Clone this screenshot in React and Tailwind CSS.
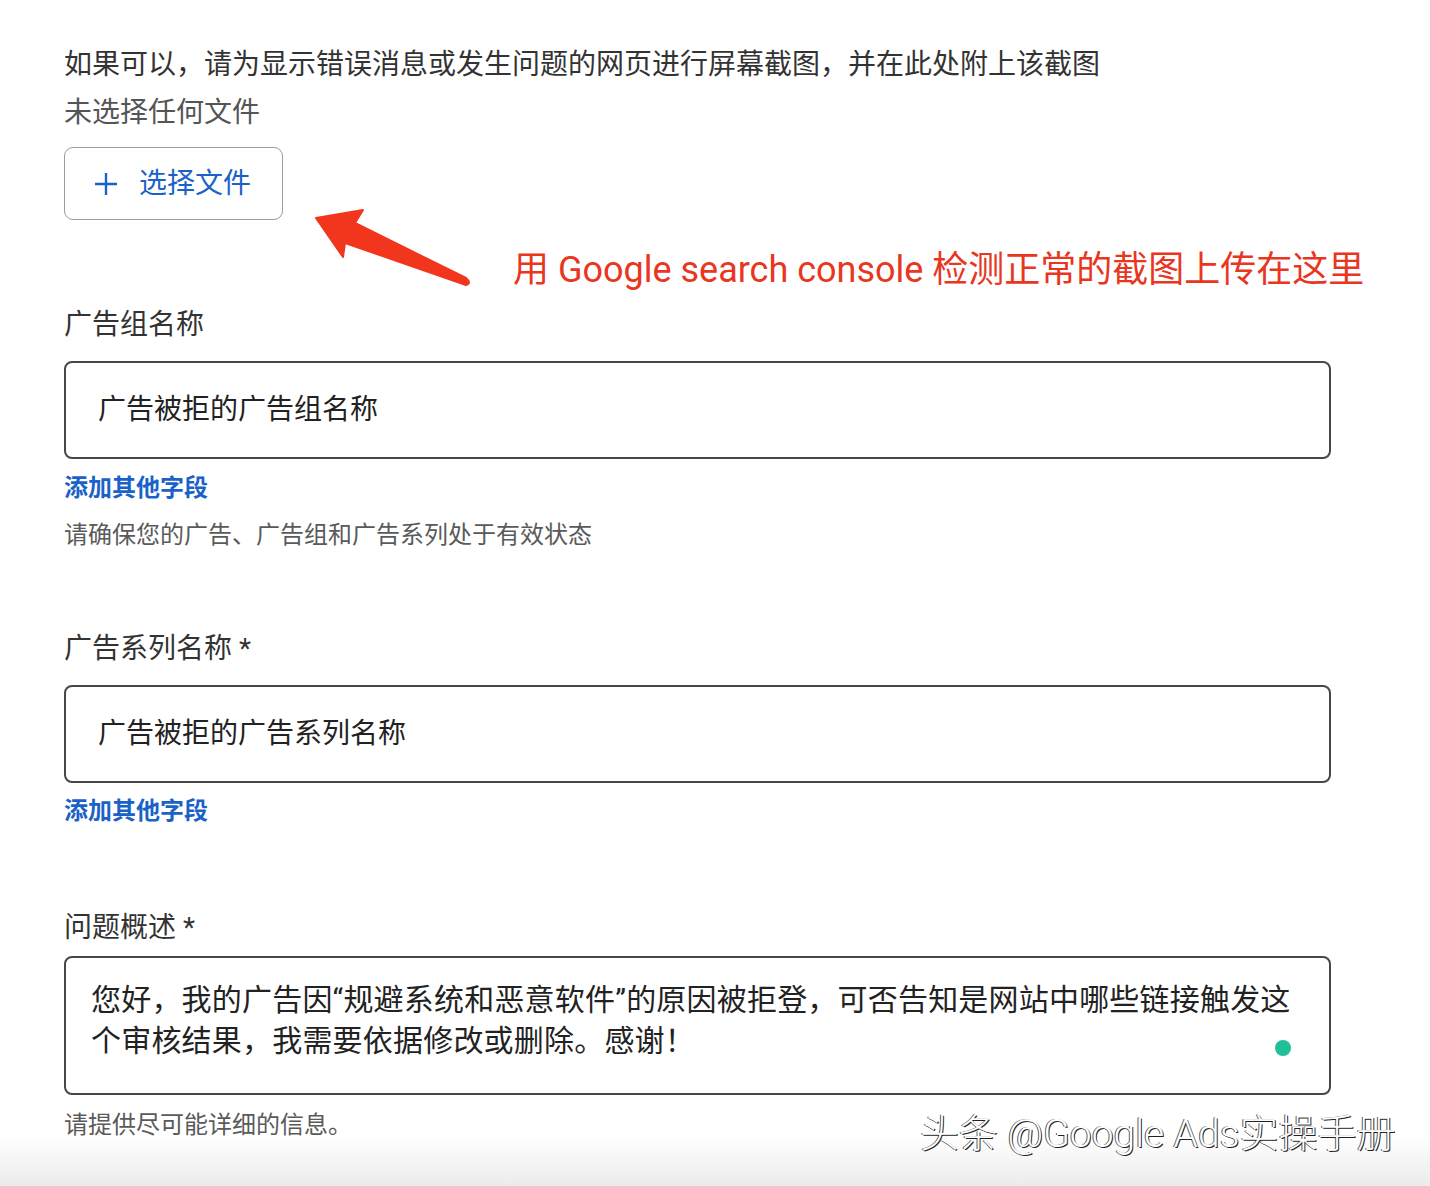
import React from "react";

const font = { fontFamily: '"Roboto", "Noto Sans CJK SC", sans-serif' };

function AddField() {
  return (
    <a href="#" className="block text-[24px] leading-[32px] font-bold text-[#1a62c8]">
      添加其他字段
    </a>
  );
}

function Arrow() {
  return (
    <svg
      className="absolute left-0 top-0 pointer-events-none"
      width="500"
      height="300"
      viewBox="0 0 500 300"
    >
      <path
        d="M316 218 L363 210 L355 223 L466 278 Q472 283 466 285 L345 243 L343 257 Z"
        fill="#f2361d"
        stroke="#f2361d"
        strokeWidth="2"
        strokeLinejoin="round"
      />
    </svg>
  );
}

export default function App() {
  return (
    <div className="relative min-h-[1186px] bg-white overflow-hidden" style={font}>
      <Arrow />
      <div className="pl-[64px] pt-[45px] w-[1331px]">
        <p className="text-[28px] leading-[40px] text-[#333]">
          如果可以，请为显示错误消息或发生问题的网页进行屏幕截图，并在此处附上该截图
        </p>
        <p className="mt-2 text-[28px] leading-[40px] text-[#555]">未选择任何文件</p>

        <div className="relative mt-[14px]">
          <button className="flex items-center h-[73px] w-[219px] rounded-[9px] border-[1.5px] border-[#9c9c9c] pl-[28px] text-[28px] text-[#1a62c8]">
            <svg width="26" height="26" viewBox="0 0 26 26" className="mr-[20px]">
              <path d="M13 2 V24 M2 13 H24" stroke="#1a62c8" strokeWidth="2.4" />
            </svg>
            选择文件
          </button>
          <p className="absolute left-[449px] top-[100px] text-[36px] leading-[46px] text-[#e8361f] whitespace-nowrap">
            用 Google search console 检测正常的截图上传在这里
          </p>
        </div>

        <p className="mt-[85px] text-[28px] leading-[40px] text-[#333]">广告组名称</p>
        <div className="mt-[16px] h-[98px] rounded-[8px] border-2 border-[#474747] flex items-center pl-[32px] text-[28px] text-[#222]">
          广告被拒的广告组名称
        </div>
        <div className="mt-[13px]">
          <AddField />
        </div>
        <p className="mt-[15px] text-[24px] leading-[32px] text-[#5a5a5a]">
          请确保您的广告、广告组和广告系列处于有效状态
        </p>

        <p className="mt-[78px] text-[28px] leading-[40px] text-[#333]">广告系列名称 *</p>
        <div className="mt-[16px] h-[98px] rounded-[8px] border-2 border-[#474747] flex items-center pl-[32px] text-[28px] text-[#222]">
          广告被拒的广告系列名称
        </div>
        <div className="mt-[12px]">
          <AddField />
        </div>

        <p className="mt-[81px] text-[28px] leading-[40px] text-[#333]">问题概述 *</p>
        <div className="relative mt-[8px] h-[139px] rounded-[8px] border-2 border-[#474747] pl-[25px] pt-[21px] text-[30px] leading-[41px] tracking-[0.2px] text-[#222]">
          <p>
            您好，我的广告因“规避系统和恶意软件”的原因被拒登，可否告知是网站中哪些链接触发这
            <br />
            个审核结果，我需要依据修改或删除。感谢！
          </p>
          <span className="absolute right-[38px] top-[82px] w-[16px] h-[16px] rounded-full bg-[#1fbf98]" />
        </div>
        <p className="mt-[14px] text-[24px] leading-[32px] text-[#5a5a5a]">请提供尽可能详细的信息。</p>
      </div>

      <div className="absolute left-0 right-0 bottom-0 h-[50px] bg-gradient-to-b from-white to-[#ebebeb]" />
      <p className="absolute left-[920px] top-[1110px] text-[39px] leading-[48px] font-light text-white whitespace-nowrap [text-shadow:1px_1px_0_#222,-1px_0_0_#555]">
        头条 @Google Ads实操手册
      </p>
    </div>
  );
}
